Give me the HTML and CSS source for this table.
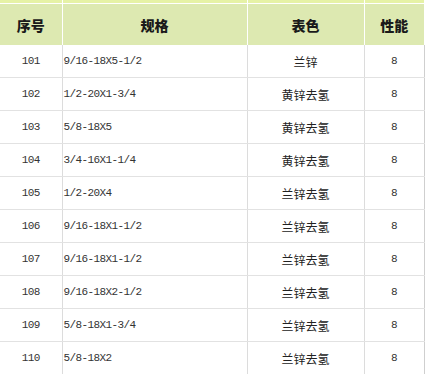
FILE: index.html
```html
<!DOCTYPE html>
<html lang="zh-CN">
<head>
    <meta charset="UTF-8">
    <title>规格表</title>
    <link rel="stylesheet" href="styles.css">
</head>
<body>
    <table class="spec-table">
        <colgroup>
            <col class="col-no">
            <col class="col-spec">
            <col class="col-color">
            <col class="col-grade">
        </colgroup>
        <thead>
            <tr class="strip">
                <td></td><td></td><td></td><td></td>
            </tr>
            <tr class="head">
                <th>序号</th>
                <th>规格</th>
                <th>表色</th>
                <th>性能</th>
            </tr>
        </thead>
        <tbody>
            <tr><td class="num">101</td><td class="spec">9/16-18X5-1/2</td><td class="color">兰锌</td><td class="num">8</td></tr>
            <tr><td class="num">102</td><td class="spec">1/2-20X1-3/4</td><td class="color">黄锌去氢</td><td class="num">8</td></tr>
            <tr><td class="num">103</td><td class="spec">5/8-18X5</td><td class="color">黄锌去氢</td><td class="num">8</td></tr>
            <tr><td class="num">104</td><td class="spec">3/4-16X1-1/4</td><td class="color">黄锌去氢</td><td class="num">8</td></tr>
            <tr><td class="num">105</td><td class="spec">1/2-20X4</td><td class="color">兰锌去氢</td><td class="num">8</td></tr>
            <tr><td class="num">106</td><td class="spec">9/16-18X1-1/2</td><td class="color">兰锌去氢</td><td class="num">8</td></tr>
            <tr><td class="num">107</td><td class="spec">9/16-18X1-1/2</td><td class="color">兰锌去氢</td><td class="num">8</td></tr>
            <tr><td class="num">108</td><td class="spec">9/16-18X2-1/2</td><td class="color">兰锌去氢</td><td class="num">8</td></tr>
            <tr><td class="num">109</td><td class="spec">5/8-18X1-3/4</td><td class="color">兰锌去氢</td><td class="num">8</td></tr>
            <tr><td class="num">110</td><td class="spec">5/8-18X2</td><td class="color">兰锌去氢</td><td class="num">8</td></tr>
        </tbody>
    </table>
</body>
</html>
```

FILE: styles.css
```css
body {
    margin: 0;
    background: #fff;
    font-family: "Liberation Mono", "Noto Sans CJK SC", monospace;
    color: #333;
}

.spec-table {
    border-collapse: collapse;
    table-layout: fixed;
    width: 424px;
}

.col-no { width: 62px; }
.col-spec { width: 185px; }
.col-color { width: 117px; }
.col-grade { width: 60px; }

.strip td {
    height: 3px;
    padding: 0;
    background: #e6f2a6;
    border-left: 1px solid #fff;
    border-bottom: 1px solid #fff;
}

.strip td:first-child {
    border-left: none;
}

.head th {
    height: 41px;
    padding: 0;
    background: #dde9b1;
    border-left: 1px solid #fff;
    font-family: "Noto Sans CJK SC", sans-serif;
    font-size: 14px;
    font-weight: 900;
    color: #1a1a1a;
    text-align: center;
}

.head th:first-child {
    border-left: none;
}

tbody td {
    height: 32px;
    padding: 0;
    border-left: 1px solid #dcdcdc;
    border-bottom: 1px solid #e2e2e2;
    font-size: 11px;
    letter-spacing: -0.6px;
    text-align: center;
}

tbody td:first-child {
    border-left: none;
}

tbody td:last-child {
    border-right: 1px solid #cfcfcf;
}

tbody tr:last-child td {
    border-bottom: none;
}

.spec {
    text-align: left;
    padding-left: 1px;
}

.color {
    font-family: "Noto Sans CJK SC", sans-serif;
    font-size: 12px;
    letter-spacing: 0;
    color: #222;
}
```
